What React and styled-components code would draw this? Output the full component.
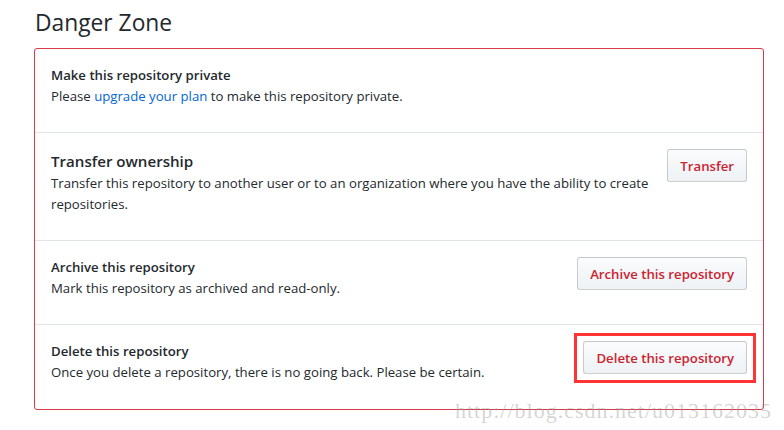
import React from "react";
import styled, { createGlobalStyle } from "styled-components";

const GlobalStyle = createGlobalStyle`
  html, body {
    margin: 0;
    padding: 0;
    background: #fff;
  }
  body {
    font-family: "Open Sans", "Noto Sans", "Liberation Sans", sans-serif;
    color: #24292e;
  }
`;

const Page = styled.div`
  position: relative;
  width: 784px;
  height: 430px;
  padding: 8px 0 0 34px;
  box-sizing: border-box;
  overflow: hidden;
`;

const Heading = styled.h2`
  margin: 0 0 10px 1px;
  font-size: 22.8px;
  font-weight: 400;
  line-height: 30px;
`;

const DangerBox = styled.ul`
  list-style: none;
  margin: 0;
  padding: 0;
  width: 730px;
  box-sizing: border-box;
  border: 1px solid #d73a49;
  border-radius: 3px;
`;

const Row = styled.li`
  display: flex;
  align-items: flex-start;
  gap: 16px;
  padding: 16px 16px 25px;
  border-top: 1px solid #e1e4e8;

  &:first-child {
    border-top: 0;
  }

  &:last-child {
    padding-bottom: 26px;
  }
`;

const Info = styled.div`
  flex: 1;
  min-width: 0;
`;

const Title = styled.strong`
  display: block;
  font-size: ${(p) => (p.$large ? "15.1px" : "13.2px")};
  line-height: ${(p) => (p.$large ? "24px" : "21px")};
  font-weight: 600;
`;

const Description = styled.p`
  margin: 0;
  font-size: 13.2px;
  line-height: 21px;
`;

const Link = styled.a`
  color: #0366d6;
  text-decoration: none;
`;

const ButtonWrap = styled.div`
  position: relative;
  flex: none;

  ${(p) =>
    p.$marked &&
    `
    &::after {
      content: "";
      position: absolute;
      top: -8px;
      left: -9px;
      right: -9px;
      bottom: -9px;
      border: 3px solid #ff3535;
      pointer-events: none;
    }
  `}
`;

const DangerButton = styled.button`
  display: block;
  height: 33px;
  padding: 0 12px;
  font-family: inherit;
  font-size: 13.2px;
  font-weight: 600;
  color: #cb2431;
  background: linear-gradient(#fafbfc, #eff3f6 90%);
  border: 1px solid rgba(27, 31, 35, 0.2);
  border-radius: 3px;
  cursor: pointer;
`;

const Watermark = styled.span`
  position: absolute;
  right: 12px;
  bottom: 6px;
  font-family: "Liberation Serif", "DejaVu Serif", serif;
  font-size: 22px;
  letter-spacing: 1px;
  color: rgba(160, 160, 160, 0.45);
  pointer-events: none;
`;

const rows = [
  {
    title: "Transfer ownership",
    large: true,
    text:
      "Transfer this repository to another user or to an organization where you have the ability to create repositories.",
    action: "Transfer",
  },
  {
    title: "Archive this repository",
    text: "Mark this repository as archived and read-only.",
    action: "Archive this repository",
  },
  {
    title: "Delete this repository",
    text: "Once you delete a repository, there is no going back. Please be certain.",
    action: "Delete this repository",
    marked: true,
  },
];

const App = () => {
  return (
    <Page>
      <GlobalStyle />
      <Heading>Danger Zone</Heading>
      <DangerBox>
        <Row>
          <Info>
            <Title>Make this repository private</Title>
            <Description>
              Please <Link href="#">upgrade your plan</Link> to make this
              repository private.
            </Description>
          </Info>
        </Row>
        {rows.map((row) => (
          <Row key={row.title}>
            <Info>
              <Title $large={row.large}>{row.title}</Title>
              <Description>{row.text}</Description>
            </Info>
            <ButtonWrap $marked={row.marked}>
              <DangerButton type="button">{row.action}</DangerButton>
            </ButtonWrap>
          </Row>
        ))}
      </DangerBox>
      <Watermark>http://blog.csdn.net/u013162035</Watermark>
    </Page>
  );
};

export default App;
